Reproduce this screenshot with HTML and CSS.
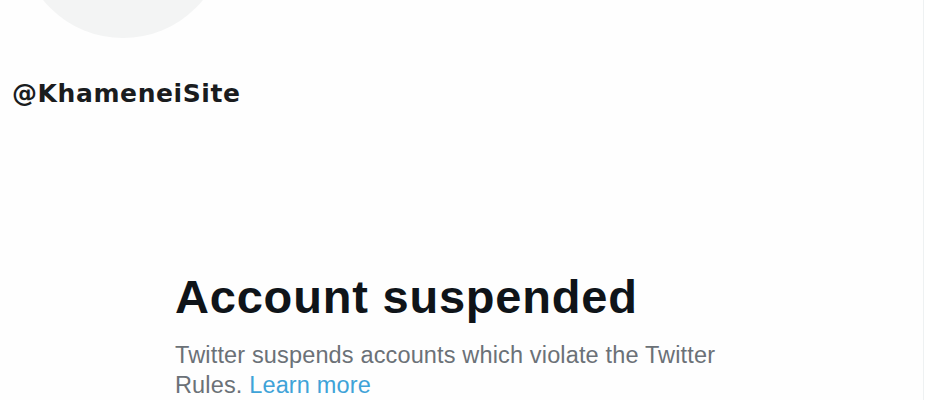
FILE: index.html
```html
<!DOCTYPE html>
<html lang="en">
<head>
    <meta charset="UTF-8">
    <title>@KhameneiSite / Twitter</title>
    <link rel="stylesheet" href="styles.css">
</head>
<body>
    <div class="layout">
        <main class="profile">
            <!-- Header photo area is cut off, only the avatar shows -->
            <div class="avatar"></div>

            <div class="handle">@KhameneiSite</div>

            <div class="empty-state">
                <h1>Account suspended</h1>
                <p>Twitter suspends accounts which violate the Twitter Rules. <a href="#">Learn more</a></p>
            </div>
        </main>
        <aside class="sidebar"></aside>
    </div>
</body>
</html>
```

FILE: styles.css
```css
/* Suspended profile page */
body {
    background-color: #ffffff;
    color: #0f1419;
    font-family: "Liberation Sans", Arial, sans-serif;
    margin: 0;
    overflow: hidden;
}

.layout {
    display: flex;
    height: 400px;
}

.profile {
    width: 923px;
    flex-shrink: 0;
    border-right: 1px solid #eef1f2;
    background-color: #fefefe;
}

.sidebar {
    flex-grow: 1;
}

.avatar {
    width: 206px;
    height: 206px;
    margin: -168px 0 0 20px;
    border-radius: 50%;
    background-color: #f3f4f4;
}

.handle {
    margin-top: 41px;
    padding-left: 12px;
    font-family: "DejaVu Sans", sans-serif;
    font-weight: bold;
    font-size: 25px;
    line-height: 29px;
    letter-spacing: 0.6px;
    color: #1a1c1e;
}

/* Suspended notice */
.empty-state {
    margin: 161px 0 0 175px;
    max-width: 560px;
}

.empty-state h1 {
    margin: 0;
    font-size: 47px;
    line-height: 56px;
    letter-spacing: 0.8px;
    color: #0f1419;
}

.empty-state p {
    margin: 15px 0 0;
    font-size: 23.5px;
    line-height: 30px;
    letter-spacing: 0.15px;
    color: #6b7177;
}

.empty-state a {
    color: #3fa3d8;
    text-decoration: none;
}
```
